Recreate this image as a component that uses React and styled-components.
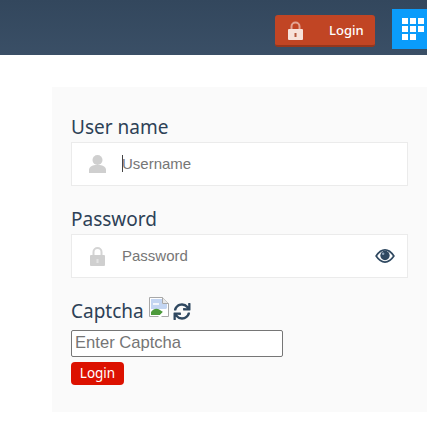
import React from "react";
import styled, { createGlobalStyle } from "styled-components";
import { FaSync } from "react-icons/fa";

const GlobalStyle = createGlobalStyle`
  html, body {
    margin: 0;
    padding: 0;
    background: #fff;
    overflow: hidden;
  }
  body {
    font-family: "Noto Sans", "Open Sans", sans-serif;
  }
`;

const Page = styled.div`
  width: 427px;
  height: 431px;
`;

// top bar
const Header = styled.header`
  display: flex;
  justify-content: flex-end;
  align-items: flex-start;
  height: 55px;
  background: linear-gradient(to bottom, #33475d, #3a4f66);
`;

const HeaderLogin = styled.button`
  display: flex;
  align-items: center;
  width: 100px;
  height: 32px;
  margin: 15px 17px 0 0;
  padding: 0 0 0 13px;
  border: 0;
  border-bottom: 2px solid #96361c;
  border-radius: 3px;
  background: #c14524;
  color: #fff;
  font-family: "Noto Sans", sans-serif;
  font-size: 13px;
  font-weight: 500;
`;

const HeaderLockIcon = styled.svg`
  flex: none;
  width: 15px;
  height: 19px;
`;

const HeaderLoginText = styled.span`
  margin-left: 26px;
`;

const AppsTile = styled.div`
  display: grid;
  grid-template-columns: repeat(3, 6px);
  grid-auto-rows: 6px;
  gap: 2px;
  align-content: center;
  box-sizing: border-box;
  width: 35px;
  height: 40px;
  margin-top: 9px;
  padding-left: 10px;
  background: #0a9cfb;
`;

const AppsDot = styled.span`
  background: #fff;
`;

// login panel
const Panel = styled.main`
  display: flex;
  flex-direction: column;
  box-sizing: border-box;
  width: 375px;
  height: 325px;
  margin: 32px 0 0 52px;
  padding: 28px 19px 0;
  background: #fafafa;
`;

const FieldLabel = styled.label`
  display: block;
  height: 27px;
  color: #2d4156;
  font-size: 19px;
  line-height: 25px;
`;

const InputBox = styled.div`
  display: flex;
  align-items: center;
  box-sizing: border-box;
  width: 337px;
  height: 44px;
  margin-bottom: 21px;
  padding: 0 12px 0 16px;
  border: 1px solid #ebebeb;
  background: #fff;
`;

const FieldIcon = styled.svg`
  flex: none;
  width: 19px;
  height: 20px;
  fill: #cfcfcf;
`;

const FieldText = styled.span`
  flex: 1;
  margin: 0 0 2px 15px;
  color: #767676;
  font-family: "Liberation Sans", Arial, sans-serif;
  font-size: 15px;
`;

const Caret = styled.span`
  display: inline-block;
  width: 1px;
  height: 17px;
  margin-right: -1px;
  vertical-align: -3px;
  background: #444;
`;

const EyeIcon = styled.svg`
  flex: none;
  width: 20px;
  height: 14px;
`;

const CaptchaRow = styled.div`
  display: flex;
  align-items: flex-start;
  height: 33px;
  margin-top: -2px;
`;

const CaptchaLabel = styled.span`
  margin-top: 2px;
  color: #2d4156;
  font-size: 19px;
  line-height: 25px;
`;

const BrokenImage = styled.svg`
  width: 20px;
  height: 20px;
  margin-left: 5px;
`;

const RefreshIcon = styled(FaSync)`
  width: 18px;
  height: 17px;
  margin: 6px 0 0 4px;
  color: #2f4860;
`;

const CaptchaInput = styled.input`
  display: block;
  box-sizing: border-box;
  width: 212px;
  height: 27px;
  padding: 0 3px 2px;
  border: 1px solid #767676;
  border-radius: 2px;
  background: #fff;
  font-family: "Liberation Sans", Arial, sans-serif;
  font-size: 16.6px;
  &::placeholder {
    color: #757575;
    opacity: 1;
  }
`;

const SubmitButton = styled.button`
  width: 53px;
  height: 23px;
  margin-top: 5px;
  padding: 0;
  border: 0;
  border-radius: 4px;
  background: #dc1100;
  color: #fff;
  font-family: "Noto Sans", sans-serif;
  font-size: 13.5px;
  line-height: 23px;
`;

const App = () => (
  <Page>
    <GlobalStyle />
    <Header>
      <HeaderLogin>
        <HeaderLockIcon viewBox="0 0 15 19">
          <path
            d="M3.500 9V5.500a4 4 0 0 1 8 0V9"
            fill="none"
            stroke="#e4a493"
            strokeWidth="2"
          />
          <rect y="8" width="15" height="11" rx="1" fill="#f7e2da" />
          <path d="M6.500 12h2v4h-2z" fill="#b5573b" />
        </HeaderLockIcon>
        <HeaderLoginText>Login</HeaderLoginText>
      </HeaderLogin>
      <AppsTile>
        {Array.from({ length: 8 }, (_, i) => (
          <AppsDot key={i} />
        ))}
      </AppsTile>
    </Header>
    <Panel>
      <FieldLabel>User name</FieldLabel>
      <InputBox>
        <FieldIcon viewBox="0 0 19 20">
          <circle cx="9.500" cy="6" r="5" />
          <path d="M1 19v-3c0-3 3-4.500 6-5h5c3 .5 6 2 6 5v3z" />
        </FieldIcon>
        <FieldText>
          <Caret />
          Username
        </FieldText>
      </InputBox>
      <FieldLabel>Password</FieldLabel>
      <InputBox>
        <FieldIcon viewBox="0 0 19 20">
          <path
            d="M5.500 10V6a4 4 0 0 1 8 0v4"
            fill="none"
            stroke="#d4d4d4"
            strokeWidth="2"
          />
          <rect x="2" y="9" width="15" height="11" rx="1" />
          <path d="M8.500 13h2v4h-2z" fill="#e4e4e4" />
        </FieldIcon>
        <FieldText>Password</FieldText>
        <EyeIcon viewBox="0 0 21 15">
          <path
            d="M1 7.500C4 3 7 1 10.500 1S17 3 20 7.500C17 12 14 14 10.500 14S4 12 1 7.500z"
            fill="#fff"
            stroke="#2f4860"
            strokeWidth="1.800"
          />
          <circle cx="10.500" cy="7" r="5" fill="#2f4860" />
          <circle cx="8.500" cy="5" r="1.300" fill="#8ea3b8" />
        </EyeIcon>
      </InputBox>
      <CaptchaRow>
        <CaptchaLabel>Captcha</CaptchaLabel>
        <BrokenImage viewBox="0 0 20 20">
          <path d="M.5.5h13l6 6v13H.5z" fill="#fff" stroke="#a8a8a8" />
          <path d="M13.500.5v6h6" fill="#e8e8e8" stroke="#a8a8a8" />
          <path d="M2 2h11v5h5v5H2z" fill="#c3d5f2" />
          <path d="M4 6h6v2H4z" fill="#f2f6fc" />
          <path d="M2 18v-3c3-4 6-4 9-2l3 2-3 3z" fill="#4d9a3c" />
          <path d="M19 10 9 20h3l7-7z" fill="#fff" />
        </BrokenImage>
        <RefreshIcon />
      </CaptchaRow>
      <CaptchaInput placeholder="Enter Captcha" />
      <SubmitButton>Login</SubmitButton>
    </Panel>
  </Page>
);

export default App;
